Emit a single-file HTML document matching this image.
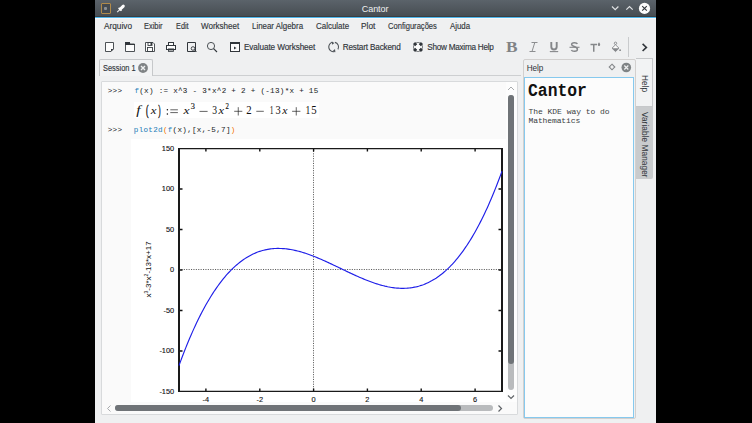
<!DOCTYPE html>
<html><head><meta charset="utf-8"><style>html,body{margin:0;padding:0;}body{width:752px;height:423px;overflow:hidden;position:relative;background:#000;}.t{position:absolute;white-space:pre;line-height:0;}.k{-webkit-text-stroke:0.15px currentColor;}.m{-webkit-text-stroke:0.04px currentColor;}svg{overflow:visible}</style></head><body>
<div style="position:absolute;left:95px;top:0;width:561px;height:423px;background:#eff0f1"></div>
<div style="position:absolute;left:95px;top:0;width:561px;height:16px;background:linear-gradient(#5b636a,#474d52)"></div>
<div style="position:absolute;left:95px;top:16px;width:561px;height:1px;background:#3a3e42"></div>
<div style="position:absolute;left:95px;top:17px;width:561px;height:1px;background:#4db5ea"></div>
<div style="position:absolute;left:95px;top:18px;width:561px;height:1px;background:#f8f8f9"></div>
<div class="t" style="left:361.80px;top:9.00px;font-family:'Liberation Sans', sans-serif;font-size:9px;color:#eff0f1;letter-spacing:-0.083px;font-weight:400;font-style:normal;">Cantor</div>
<div style="position:absolute;left:101px;top:3px;width:10px;height:11px;box-sizing:border-box;border:1px solid #b08a4a;border-radius:1px;background:#444a50"></div><div style="position:absolute;left:104px;top:7px;width:3px;height:3px;border-radius:1px;background:#8a9095"></div>
<svg style="position:absolute;left:114px;top:3px" width="12" height="12" viewBox="0 0 12 12"><path d="M3.2 9.2 L5.8 6.6" stroke="#e8e9ea" stroke-width="1.1"/><path d="M4.6 4.9 L7.5 7.8" stroke="#fcfcfc" stroke-width="1.5"/><path d="M6.4 6 L9.3 3.1" stroke="#fcfcfc" stroke-width="3" stroke-linecap="round"/></svg>
<svg style="position:absolute;left:600px;top:0" width="56" height="17" viewBox="0 0 56 17"><path d="M12 6.5 L15.2 9.7 L18.4 6.5" stroke="#dfe1e3" stroke-width="1.2" fill="none"/><path d="M26.3 9.7 L29.5 6.5 L32.7 9.7" stroke="#dfe1e3" stroke-width="1.2" fill="none"/><circle cx="44.5" cy="8.4" r="5.6" fill="#fcfcfc"/><path d="M42.2 6.1 L46.8 10.7 M46.8 6.1 L42.2 10.7" stroke="#31363b" stroke-width="1.1"/></svg>
<div class="t k" style="left:103.70px;top:26.00px;font-family:'Liberation Sans', sans-serif;font-size:8.6px;color:#31363b;letter-spacing:0.000px;font-weight:400;font-style:normal;transform:scaleX(0.9604);transform-origin:0 0;">Arquivo</div>
<div class="t k" style="left:143.80px;top:26.00px;font-family:'Liberation Sans', sans-serif;font-size:8.6px;color:#31363b;letter-spacing:0.000px;font-weight:400;font-style:normal;transform:scaleX(0.8651);transform-origin:0 0;">Exibir</div>
<div class="t k" style="left:175.70px;top:26.00px;font-family:'Liberation Sans', sans-serif;font-size:8.6px;color:#31363b;letter-spacing:0.000px;font-weight:400;font-style:normal;transform:scaleX(0.8506);transform-origin:0 0;">Edit</div>
<div class="t k" style="left:201.00px;top:26.00px;font-family:'Liberation Sans', sans-serif;font-size:8.6px;color:#31363b;letter-spacing:0.000px;font-weight:400;font-style:normal;transform:scaleX(0.9351);transform-origin:0 0;">Worksheet</div>
<div class="t k" style="left:252.10px;top:26.00px;font-family:'Liberation Sans', sans-serif;font-size:8.6px;color:#31363b;letter-spacing:0.000px;font-weight:400;font-style:normal;transform:scaleX(0.9212);transform-origin:0 0;">Linear Algebra</div>
<div class="t k" style="left:316.00px;top:26.00px;font-family:'Liberation Sans', sans-serif;font-size:8.6px;color:#31363b;letter-spacing:0.000px;font-weight:400;font-style:normal;transform:scaleX(0.9258);transform-origin:0 0;">Calculate</div>
<div class="t k" style="left:361.30px;top:26.00px;font-family:'Liberation Sans', sans-serif;font-size:8.6px;color:#31363b;letter-spacing:0.000px;font-weight:400;font-style:normal;transform:scaleX(0.9653);transform-origin:0 0;">Plot</div>
<div class="t k" style="left:388.40px;top:26.00px;font-family:'Liberation Sans', sans-serif;font-size:8.6px;color:#31363b;letter-spacing:0.000px;font-weight:400;font-style:normal;transform:scaleX(0.8819);transform-origin:0 0;">Configurações</div>
<div class="t k" style="left:449.70px;top:26.00px;font-family:'Liberation Sans', sans-serif;font-size:8.6px;color:#31363b;letter-spacing:0.000px;font-weight:400;font-style:normal;transform:scaleX(0.9130);transform-origin:0 0;">Ajuda</div>
<div class="t k" style="left:244.00px;top:48.00px;font-family:'Liberation Sans', sans-serif;font-size:8.2px;color:#31363b;letter-spacing:-0.108px;font-weight:400;font-style:normal;">Evaluate Worksheet</div>
<div class="t k" style="left:342.70px;top:48.00px;font-family:'Liberation Sans', sans-serif;font-size:8.2px;color:#31363b;letter-spacing:-0.173px;font-weight:400;font-style:normal;">Restart Backend</div>
<div class="t k" style="left:427.20px;top:48.00px;font-family:'Liberation Sans', sans-serif;font-size:8.2px;color:#31363b;letter-spacing:-0.256px;font-weight:400;font-style:normal;">Show Maxima Help</div>
<svg style="position:absolute;left:104px;top:41px" width="11" height="12" viewBox="0 0 11 12"><path d="M1.5 1.5 H9.5 V8 L7 10.5 H1.5 Z" fill="#fcfcfc" stroke="#3a3f44" stroke-width="0.9"/><path d="M9.5 8 L7 10.5 V8 Z" fill="#31363b"/></svg>
<svg style="position:absolute;left:124px;top:41px" width="12" height="12" viewBox="0 0 12 12"><path d="M1.5 1.5 H5 L6 3 H10.5 V10.5 H1.5 Z" fill="#fcfcfc" stroke="#3a3f44" stroke-width="0.9"/><rect x="1" y="1" width="5" height="3" fill="#31363b"/><rect x="1" y="3" width="10" height="1" fill="#31363b"/></svg>
<svg style="position:absolute;left:144px;top:41px" width="12" height="12" viewBox="0 0 12 12"><path d="M1.5 1.5 H9 L10.5 3 V10.5 H1.5 Z" fill="#fcfcfc" stroke="#3a3f44" stroke-width="0.9"/><rect x="4" y="1.5" width="4" height="3" fill="none" stroke="#3a3f44" stroke-width="0.9"/><rect x="6.5" y="2" width="1.5" height="2" fill="#31363b"/><rect x="3.5" y="6.5" width="5" height="4" fill="none" stroke="#3a3f44" stroke-width="0.9"/></svg>
<svg style="position:absolute;left:165px;top:41px" width="12" height="12" viewBox="0 0 12 12"><rect x="3.5" y="1.5" width="5" height="3" fill="#fcfcfc" stroke="#31363b"/><rect x="1.5" y="4.5" width="9" height="4" fill="#fcfcfc" stroke="#31363b"/><rect x="3" y="7.5" width="6" height="2" fill="#31363b"/><rect x="3.5" y="9" width="5" height="1.5" fill="#fcfcfc" stroke="#31363b" stroke-width="0.8"/></svg>
<svg style="position:absolute;left:186px;top:41px" width="12" height="12" viewBox="0 0 12 12"><path d="M1.5 1.5 H9.5 V10.5 H1.5 Z" fill="none" stroke="#31363b"/><circle cx="7" cy="7.5" r="1.8" fill="#eff0f1" stroke="#31363b" stroke-width="0.9"/><path d="M8.3 8.8 L10.5 11" stroke="#31363b"/></svg>
<svg style="position:absolute;left:206px;top:41px" width="13" height="12" viewBox="0 0 13 12"><circle cx="5" cy="5" r="3.6" fill="none" stroke="#3a3f44" stroke-width="0.9"/><path d="M7.6 7.6 L11 11" stroke="#31363b" stroke-width="1.1"/></svg>
<svg style="position:absolute;left:229px;top:41px" width="12" height="12" viewBox="0 0 12 12"><rect x="1.5" y="1.5" width="9" height="9" fill="#fcfcfc" stroke="#31363b"/><rect x="1" y="1" width="10" height="2" fill="#31363b"/><path d="M5 5.5 L7.5 7 L5 8.5 Z" fill="#31363b"/></svg>
<svg style="position:absolute;left:327px;top:41px" width="13" height="12" viewBox="0 0 13 12"><path d="M5.6 1.3 A4.7 4.7 0 0 0 7.4 10.6" fill="none" stroke="#4d5257" stroke-width="1.1"/><path d="M7.9 1.4 A4.7 4.7 0 0 1 10.9 8.4" fill="none" stroke="#4d5257" stroke-width="1.1"/><path d="M4.6 0.6 L7.4 1.9 L5.2 3.8 Z" fill="#4d5257"/><path d="M8.4 11.3 L5.8 9.9 L8.0 8.1 Z" fill="#4d5257"/></svg>
<svg style="position:absolute;left:412px;top:41px" width="12" height="12" viewBox="0 0 12 12"><defs><clipPath id="lb"><circle cx="6" cy="6" r="5.8"/></clipPath></defs><circle cx="6" cy="6" r="4.5" fill="#fcfcfc" stroke="#55595d" stroke-width="0.8"/><g clip-path="url(#lb)"><path d="M0 0 L4.2 4.2 M12 0 L7.8 4.2 M0 12 L4.2 7.8 M12 12 L7.8 7.8" stroke="#31363b" stroke-width="3"/></g><circle cx="6" cy="6" r="2" fill="#fcfcfc"/></svg>
<div class="t" style="left:506.40px;top:47.00px;font-family:'Liberation Serif', serif;font-size:14.2px;color:#808285;letter-spacing:0.000px;font-weight:700;font-style:normal;transform:scaleX(1.22);transform-origin:0 0;">B</div>
<svg style="position:absolute;left:528px;top:41px" width="11" height="12" viewBox="0 0 11 12"><path d="M3.5 1.5 H9.5 M1.5 10.5 H7.5 M6.8 1.5 L4 10.5" stroke="#8c8e90" stroke-width="1" fill="none"/></svg>
<svg style="position:absolute;left:549px;top:41px" width="10" height="12" viewBox="0 0 10 12"><path d="M2.3 1 V5.8 A2.7 2.7 0 0 0 7.7 5.8 V1" stroke="#85878a" stroke-width="1.9" fill="none"/><path d="M0.8 10.6 H9.2" stroke="#85878a" stroke-width="1.1"/></svg>
<svg style="position:absolute;left:569px;top:41px" width="11" height="12" viewBox="0 0 11 12"><path d="M8.3 3 C7.8 1.2 2.6 1 2.6 3.6 C2.6 5.8 8.4 5.4 8.4 8.2 C8.4 11 3.2 10.8 2.4 9" stroke="#85878a" stroke-width="1.5" fill="none"/><path d="M0.5 6.3 H10.5" stroke="#85878a" stroke-width="1.1"/></svg>
<svg style="position:absolute;left:590px;top:41px" width="11" height="12" viewBox="0 0 11 12"><path d="M0.5 3.6 H7 M3.75 3.6 V10.8" stroke="#85878a" stroke-width="1.5"/><path d="M9 1.2 Q10.4 3 10.2 3.8 A1.2 1.2 0 0 1 7.8 3.8 Q7.6 3 9 1.2 Z" fill="#85878a"/></svg>
<svg style="position:absolute;left:610px;top:41px" width="12" height="12" viewBox="0 0 12 12"><circle cx="5.5" cy="2.3" r="1.2" fill="none" stroke="#85878a" stroke-width="0.9"/><path d="M5.5 3.8 L9 7.2 L5.5 10.6 L2 7.2 Z" fill="#fcfcfc" stroke="#85878a" stroke-width="0.9"/><path d="M2 7.2 H9 L5.5 10.6 Z" fill="#85878a"/><circle cx="10.1" cy="9.2" r="0.9" fill="#85878a"/></svg>
<div style="position:absolute;left:628px;top:37px;width:1px;height:20px;background:#c9cbcd"></div>
<svg style="position:absolute;left:640px;top:42px" width="9" height="10" viewBox="0 0 9 10"><path d="M2.6 1.8 L6.4 5.4 L2.6 9" stroke="#31363b" stroke-width="1.6" fill="none"/></svg>
<div style="position:absolute;left:152px;top:75px;width:369px;height:1px;background:#cdcfd1"></div>
<div style="position:absolute;left:98.5px;top:59px;width:54px;height:17px;background:#f2f3f4;border:1px solid #c6c8ca;border-bottom:none;border-radius:2px 2px 0 0;box-sizing:border-box"></div>
<div class="t k" style="left:103.30px;top:68.00px;font-family:'Liberation Sans', sans-serif;font-size:8.6px;color:#31363b;letter-spacing:0.000px;font-weight:400;font-style:normal;transform:scaleX(0.8630);transform-origin:0 0;">Session 1</div>
<svg style="position:absolute;left:137px;top:62px" width="12" height="12" viewBox="0 0 12 12"><circle cx="6" cy="6" r="4.9" fill="#7f8385"/><path d="M4 4 L8 8 M8 4 L4 8" stroke="#eff0f1" stroke-width="1.4"/></svg>
<div style="position:absolute;left:101px;top:81px;width:417px;height:334px;background:#fafafa;border:1px solid #d8dadc;box-sizing:border-box;border-radius:1px"></div>
<div class="t m" style="left:107.70px;top:91.00px;font-family:'Liberation Mono', monospace;font-size:7.6px;color:#232629;letter-spacing:0.289px">>>></div>
<div class="t m" style="left:134.40px;top:91.00px;font-family:'Liberation Mono', monospace;font-size:7.6px;color:#2980b9;letter-spacing:0.289px">f</div>
<div class="t m" style="left:139.25px;top:91.00px;font-family:'Liberation Mono', monospace;font-size:7.6px;color:#232629;letter-spacing:0.289px">(x)&nbsp;:=&nbsp;x^3&nbsp;-&nbsp;3*x^2&nbsp;+&nbsp;2&nbsp;+&nbsp;(-13)*x&nbsp;+&nbsp;15</div>
<div class="t m" style="left:107.70px;top:130.00px;font-family:'Liberation Mono', monospace;font-size:7.6px;color:#232629;letter-spacing:0.289px">>>></div>
<div class="t m" style="left:133.80px;top:130.00px;font-family:'Liberation Mono', monospace;font-size:7.6px;color:#2980b9;letter-spacing:0.289px">plot2d</div>
<div class="t m" style="left:162.90px;top:130.00px;font-family:'Liberation Mono', monospace;font-size:7.6px;color:#f67400;letter-spacing:0.289px">(</div>
<div class="t m" style="left:167.75px;top:130.00px;font-family:'Liberation Mono', monospace;font-size:7.6px;color:#2980b9;letter-spacing:0.289px">f</div>
<div class="t m" style="left:172.60px;top:130.00px;font-family:'Liberation Mono', monospace;font-size:7.6px;color:#232629;letter-spacing:0.289px">(x),[x,-5,7]</div>
<div class="t m" style="left:230.80px;top:130.00px;font-family:'Liberation Mono', monospace;font-size:7.6px;color:#f67400;letter-spacing:0.289px">)</div>
<div style="position:absolute;left:134px;top:102px;width:185px;height:16px;background:#ffffff"></div>
<svg style="position:absolute;left:0;top:0" width="752" height="423" viewBox="0 0 752 423"><g font-family="Liberation Serif, serif" fill="#111"><text transform="translate(136.15 113.93) scale(15.443 11.880)" font-size="1" font-style="italic" stroke="#111" stroke-width="0" vector-effect="non-scaling-stroke">f</text><text transform="translate(146.05 114.70) scale(7.820 13.884)" font-size="1"  stroke="#111" stroke-width="0.35" vector-effect="non-scaling-stroke">(</text><text transform="translate(150.71 114.35) scale(12.896 10.870)" font-size="1" font-style="italic" stroke="#111" stroke-width="0" vector-effect="non-scaling-stroke">x</text><text transform="translate(158.15 114.70) scale(6.917 13.884)" font-size="1"  stroke="#111" stroke-width="0.35" vector-effect="non-scaling-stroke">)</text><text transform="translate(183.42 114.35) scale(13.552 10.870)" font-size="1" font-style="italic" stroke="#111" stroke-width="0" vector-effect="non-scaling-stroke">x</text><text transform="translate(190.75 108.57) scale(8.400 7.732)" font-size="1"  stroke="#111" stroke-width="0.12" vector-effect="non-scaling-stroke">3</text><text transform="translate(212.15 114.33) scale(9.600 12.193)" font-size="1"  stroke="#111" stroke-width="0" vector-effect="non-scaling-stroke">3</text><text transform="translate(218.41 114.35) scale(12.459 10.870)" font-size="1" font-style="italic" stroke="#111" stroke-width="0" vector-effect="non-scaling-stroke">x</text><text transform="translate(225.45 108.65) scale(6.800 7.849)" font-size="1"  stroke="#111" stroke-width="0.12" vector-effect="non-scaling-stroke">2</text><text transform="translate(246.35 114.45) scale(10.800 12.377)" font-size="1"  stroke="#111" stroke-width="0" vector-effect="non-scaling-stroke">2</text><text transform="translate(269.85 114.45) scale(7.600 12.424)" font-size="1"  stroke="#111" stroke-width="0" vector-effect="non-scaling-stroke">1</text><text transform="translate(275.45 114.33) scale(10.400 12.193)" font-size="1"  stroke="#111" stroke-width="0" vector-effect="non-scaling-stroke">3</text><text transform="translate(282.30 114.35) scale(11.803 10.870)" font-size="1" font-style="italic" stroke="#111" stroke-width="0" vector-effect="non-scaling-stroke">x</text><text transform="translate(305.55 114.45) scale(9.600 12.424)" font-size="1"  stroke="#111" stroke-width="0" vector-effect="non-scaling-stroke">1</text><text transform="translate(311.35 114.33) scale(10.800 12.331)" font-size="1"  stroke="#111" stroke-width="0" vector-effect="non-scaling-stroke">5</text><path d="M170.3 109.8 H177.9 M170.3 112.6 H177.9 M199.5 111.4 H207.6 M256.3 111.3 H263.8 M234.2 111.3 H242.3 M238.25 107.2 V115.5 M292.1 111.3 H300.4 M296.25 107.2 V115.5" stroke="#222" stroke-width="0.7" fill="none"/><circle cx="167.4" cy="109.7" r="0.75" fill="#111"/><circle cx="167.4" cy="114.0" r="0.75" fill="#111"/></g></svg>
<div style="position:absolute;left:131px;top:138.5px;width:376px;height:263.5px;background:#ffffff"></div>
<svg style="position:absolute;left:0;top:0" width="752" height="423" viewBox="0 0 752 423"><path d="M313.5 148.5 V391.5 M179 269.5 H502" stroke="#333" stroke-width="0.8" stroke-dasharray="1.1 1.3" fill="none"/><path d="M205.9 391.5 v-3 M205.9 148.5 v3 M259.8 391.5 v-3 M259.8 148.5 v3 M313.6 391.5 v-3 M313.6 148.5 v3 M367.4 391.5 v-3 M367.4 148.5 v3 M421.2 391.5 v-3 M421.2 148.5 v3 M475.1 391.5 v-3 M475.1 148.5 v3 M179 351.0 h3.5 M502 351.0 h-3.5 M179 310.5 h3.5 M502 310.5 h-3.5 M179 270.0 h3.5 M502 270.0 h-3.5 M179 229.5 h3.5 M502 229.5 h-3.5 M179 189.0 h3.5 M502 189.0 h-3.5 " stroke="#111" stroke-width="1.4" fill="none"/><path d="M178 148.6 H503 M178 391.4 H503" stroke="#1a1a1a" stroke-width="1.2"/><path d="M179 148 V391.8 M502 148 V391.8" stroke="#1a1a1a" stroke-width="2"/><polyline points="179.00,365.58 180.35,361.89 181.69,358.27 183.04,354.73 184.38,351.25 185.73,347.85 187.07,344.51 188.42,341.25 189.77,338.05 191.11,334.92 192.46,331.86 193.80,328.87 195.15,325.94 196.50,323.08 197.84,320.28 199.19,317.55 200.53,314.88 201.88,312.27 203.23,309.73 204.57,307.25 205.92,304.83 207.26,302.47 208.61,300.17 209.95,297.93 211.30,295.75 212.65,293.63 213.99,291.56 215.34,289.56 216.68,287.61 218.03,285.71 219.38,283.87 220.72,282.09 222.07,280.36 223.41,278.68 224.76,277.05 226.10,275.48 227.45,273.96 228.80,272.49 230.14,271.07 231.49,269.70 232.83,268.38 234.18,267.11 235.53,265.88 236.87,264.71 238.22,263.58 239.56,262.49 240.91,261.46 242.25,260.46 243.60,259.52 244.95,258.61 246.29,257.75 247.64,256.93 248.98,256.15 250.33,255.42 251.68,254.72 253.02,254.07 254.37,253.45 255.71,252.87 257.06,252.33 258.40,251.83 259.75,251.37 261.10,250.94 262.44,250.55 263.79,250.19 265.13,249.87 266.48,249.59 267.82,249.33 269.17,249.11 270.52,248.92 271.86,248.76 273.21,248.64 274.55,248.54 275.90,248.47 277.25,248.44 278.59,248.43 279.94,248.45 281.28,248.49 282.63,248.57 283.98,248.67 285.32,248.79 286.67,248.94 288.01,249.11 289.36,249.31 290.70,249.53 292.05,249.78 293.40,250.04 294.74,250.33 296.09,250.63 297.43,250.96 298.78,251.31 300.12,251.67 301.47,252.06 302.82,252.46 304.16,252.88 305.51,253.31 306.85,253.76 308.20,254.23 309.55,254.71 310.89,255.20 312.24,255.71 313.58,256.23 314.93,256.76 316.27,257.31 317.62,257.86 318.97,258.43 320.31,259.00 321.66,259.59 323.00,260.18 324.35,260.78 325.70,261.39 327.04,262.00 328.39,262.62 329.73,263.25 331.08,263.88 332.43,264.51 333.77,265.15 335.12,265.79 336.46,266.44 337.81,267.08 339.15,267.73 340.50,268.38 341.85,269.03 343.19,269.68 344.54,270.32 345.88,270.97 347.23,271.61 348.57,272.25 349.92,272.88 351.27,273.51 352.61,274.14 353.96,274.76 355.30,275.37 356.65,275.98 358.00,276.58 359.34,277.17 360.69,277.76 362.03,278.33 363.38,278.90 364.73,279.45 366.07,280.00 367.42,280.53 368.76,281.05 370.11,281.56 371.45,282.05 372.80,282.53 374.15,283.00 375.49,283.45 376.84,283.88 378.18,284.30 379.53,284.70 380.88,285.09 382.22,285.45 383.57,285.80 384.91,286.13 386.26,286.43 387.60,286.72 388.95,286.98 390.30,287.23 391.64,287.45 392.99,287.65 394.33,287.82 395.68,287.97 397.02,288.09 398.37,288.19 399.72,288.27 401.06,288.31 402.41,288.33 403.75,288.32 405.10,288.29 406.45,288.22 407.79,288.12 409.14,288.00 410.48,287.84 411.83,287.65 413.17,287.43 414.52,287.17 415.87,286.89 417.21,286.57 418.56,286.21 419.90,285.82 421.25,285.39 422.60,284.93 423.94,284.43 425.29,283.89 426.63,283.31 427.98,282.69 429.33,282.04 430.67,281.34 432.02,280.61 433.36,279.83 434.71,279.01 436.05,278.15 437.40,277.24 438.75,276.30 440.09,275.30 441.44,274.27 442.78,273.18 444.13,272.05 445.48,270.88 446.82,269.65 448.17,268.38 449.51,267.06 450.86,265.69 452.20,264.27 453.55,262.80 454.90,261.28 456.24,259.71 457.59,258.08 458.93,256.40 460.28,254.67 461.62,252.89 462.97,251.05 464.32,249.15 465.66,247.20 467.01,245.20 468.35,243.13 469.70,241.01 471.05,238.83 472.39,236.59 473.74,234.29 475.08,231.93 476.43,229.51 477.77,227.03 479.12,224.49 480.47,221.88 481.81,219.21 483.16,216.48 484.50,213.68 485.85,210.82 487.20,207.89 488.54,204.90 489.89,201.84 491.23,198.71 492.58,195.51 493.93,192.25 495.27,188.91 496.62,185.51 497.96,182.03 499.31,178.49 500.65,174.87 502.00,171.18" fill="none" stroke="#1f1fe8" stroke-width="1.15"/><g font-family="Liberation Sans, sans-serif" font-size="7.4" fill="#111" stroke="#111" stroke-width="0.12"><text x="174.2" y="150.8" text-anchor="end">150</text><text x="174.2" y="191.3" text-anchor="end">100</text><text x="174.2" y="231.8" text-anchor="end">50</text><text x="174.2" y="272.3" text-anchor="end">0</text><text x="174.2" y="312.8" text-anchor="end">-50</text><text x="174.2" y="353.3" text-anchor="end">-100</text><text x="174.2" y="393.8" text-anchor="end">-150</text><text x="205.9" y="401.8" text-anchor="middle">-4</text><text x="259.8" y="401.8" text-anchor="middle">-2</text><text x="313.6" y="401.8" text-anchor="middle">0</text><text x="367.4" y="401.8" text-anchor="middle">2</text><text x="421.2" y="401.8" text-anchor="middle">4</text><text x="475.1" y="401.8" text-anchor="middle">6</text></g><text transform="translate(151.2 297.6) rotate(-90)" font-family="Liberation Sans, sans-serif" font-size="8" fill="#111">x<tspan dy="-2.8" font-size="5.2">3</tspan><tspan dy="2.8">-3*x</tspan><tspan dy="-2.8" font-size="5.2">2</tspan><tspan dy="2.8">-13*x+17</tspan></text></svg>
<div style="position:absolute;left:506px;top:82px;width:11px;height:320px;background:#fdfdfd"></div>
<svg style="position:absolute;left:506px;top:84px" width="10" height="10" viewBox="0 0 10 10"><path d="M2 6 L5 3 L8 6" stroke="#a8abae" stroke-width="1" fill="none"/></svg>
<div style="position:absolute;left:508px;top:94.5px;width:6px;height:295px;background:#b9bbbd;border-radius:3px"></div>
<div style="position:absolute;left:508px;top:94.5px;width:6px;height:269px;background:#6f7377;border-radius:3px"></div>
<svg style="position:absolute;left:506px;top:392px" width="10" height="10" viewBox="0 0 10 10"><path d="M2 3.5 L5 6.5 L8 3.5" stroke="#5f6367" stroke-width="1.2" fill="none"/></svg>
<svg style="position:absolute;left:104px;top:403px" width="10" height="11" viewBox="0 0 10 11"><path d="M6.5 2.5 L3.5 5.5 L6.5 8.5" stroke="#a8abae" stroke-width="1" fill="none"/></svg>
<div style="position:absolute;left:114.5px;top:405px;width:378px;height:6px;background:#b9bbbd;border-radius:3px"></div>
<div style="position:absolute;left:114.5px;top:405px;width:346px;height:6px;background:#6f7377;border-radius:3px"></div>
<svg style="position:absolute;left:495px;top:403px" width="10" height="11" viewBox="0 0 10 11"><path d="M3.5 2.5 L6.5 5.5 L3.5 8.5" stroke="#5f6367" stroke-width="1.2" fill="none"/></svg>
<div style="position:absolute;left:523px;top:59px;width:113px;height:359.5px;border:1px solid #d2d0cf;box-sizing:border-box;border-radius:2px;background:#eff0f1"></div>
<div class="t" style="left:526.80px;top:69.00px;font-family:'Liberation Sans', sans-serif;font-size:8.2px;color:#31363b;letter-spacing:-0.122px;font-weight:400;font-style:normal;">Help</div>
<svg style="position:absolute;left:607px;top:62px" width="10" height="10" viewBox="0 0 10 10"><path d="M5 2.2 L7.8 5 L5 7.8 L2.2 5 Z" fill="none" stroke="#85888b" stroke-width="1.1"/></svg>
<svg style="position:absolute;left:620px;top:61px" width="12" height="12" viewBox="0 0 12 12"><circle cx="6.3" cy="6.5" r="4.8" fill="#7f8385"/><path d="M4.3 4.5 L8.3 8.5 M8.3 4.5 L4.3 8.5" stroke="#eff0f1" stroke-width="1.2"/></svg>
<div style="position:absolute;left:524px;top:77px;width:110px;height:341px;border:1px solid #86c9ee;box-sizing:border-box;background:#fcfcfc"></div>
<div class="t" style="left:527.60px;top:92.00px;font-family:'Liberation Mono', monospace;font-size:18.4px;color:#111;letter-spacing:0.000px;font-weight:700;font-style:normal;transform:scaleX(0.89);transform-origin:0 0;">Cantor</div>
<div class="t" style="left:528.50px;top:112.00px;font-family:'Liberation Mono', monospace;font-size:8px;color:#3a3e42;letter-spacing:-0.032px;font-weight:400;font-style:normal;">The KDE way to do</div>
<div class="t" style="left:528.50px;top:121.00px;font-family:'Liberation Mono', monospace;font-size:8px;color:#3a3e42;letter-spacing:-0.111px;font-weight:400;font-style:normal;">Mathematics</div>
<div style="position:absolute;left:636px;top:58px;width:16.5px;height:49px;background:#f2f3f4;border:1px solid #c6c8ca;border-left:none;box-sizing:border-box"></div>
<div style="position:absolute;left:636px;top:107px;width:16.5px;height:71.5px;background:#c9cbcd;border-radius:0 0 2px 0"></div>
<div class="t" style="left:644px;top:75px;transform-origin:0 0;transform:rotate(90deg);font-family:'Liberation Sans',sans-serif;font-size:8.2px;line-height:0;color:#31363b;white-space:nowrap;letter-spacing:0.1px">Help</div>
<div class="t" style="left:644px;top:112px;transform-origin:0 0;transform:rotate(90deg);font-family:'Liberation Sans',sans-serif;font-size:8.2px;line-height:0;color:#31363b;white-space:nowrap;letter-spacing:0.1px">Variable Manager</div>
</body></html>
